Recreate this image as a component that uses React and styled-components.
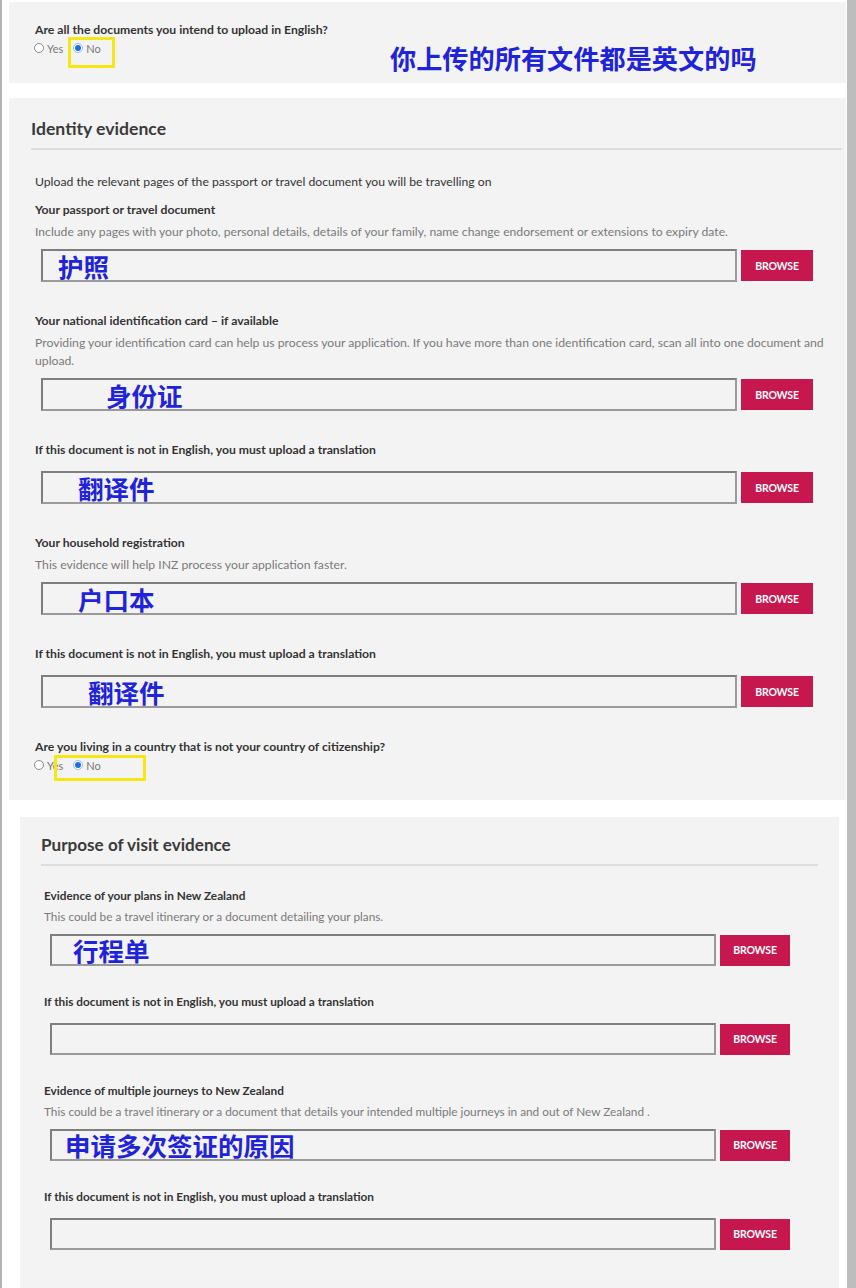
import React from 'react';
import styled, { createGlobalStyle } from 'styled-components';

const GlobalStyle = createGlobalStyle`
  * { box-sizing: border-box; }
  body {
    margin: 0;
    background: #ffffff;
    font-family: Lato, "Noto Sans", sans-serif;
    color: #333;
  }
`;

const Page = styled.div`
  min-height: 100vh;
  display: flex;
  flex-direction: column;
  border-left: 2px solid #b4b4b4;
  border-right: 9px solid #bdbdbd;
`;

// --fs text size, --hs heading size, --hint space above a hint line
const Panel = styled.section`
  --fs: ${(p) => p.$fs || 12.2}px;
  --hs: ${(p) => p.$hs || 17.6}px;
  --hint: ${(p) => p.$hint || 6}px;
  background: #f3f3f3;
  margin: ${(p) => p.$margin};
  padding: ${(p) => p.$padding};
  ${(p) => p.$grow && 'flex: 1;'}
`;

const Heading = styled.h2`
  margin: 0;
  font-size: var(--hs);
  line-height: 20px;
  font-weight: 700;
  color: #3a3a3a;
  padding-bottom: 9px;
  border-bottom: 2px solid #dedede;
`;

const Body = styled.div`
  padding: ${(p) => p.$padding};
`;

const Intro = styled.p`
  margin: 0 0 14px;
  font-size: var(--fs);
  line-height: 14px;
  color: #333;
`;

const FieldList = styled.div`
  display: flex;
  flex-direction: column;
  gap: ${(p) => p.$gap}px;
`;

const Field = styled.div`
  display: flex;
  flex-direction: column;
`;

const Label = styled.div`
  font-size: var(--fs);
  line-height: 14px;
  font-weight: 700;
  color: #333;
`;

const Hint = styled.div`
  margin-top: var(--hint);
  font-size: var(--fs);
  line-height: 18px;
  color: #7a7a7a;
`;

const UploadRow = styled.div`
  display: flex;
  align-items: center;
  gap: 4px;
  margin: ${(p) => p.$top}px ${(p) => p.$right}px 0 6px;
`;

const FileBox = styled.div`
  flex: 1;
  height: ${(p) => p.$h || 33}px;
  border: 2px solid #7e7e7e;
  border-right-color: #9a9a9a;
  border-bottom-color: #9a9a9a;
  background: #f3f3f3;
  padding-left: ${(p) => p.$indent || 0}px;
  display: flex;
  align-items: center;
`;

const Annotation = styled.span`
  font-family: "Noto Sans CJK SC", sans-serif;
  font-weight: 700;
  font-size: ${(p) => p.$size || 25.5}px;
  line-height: 1;
  color: #1f23d9;
  white-space: nowrap;
`;

const Browse = styled.button`
  width: ${(p) => p.$w || 72}px;
  height: 31px;
  border: none;
  background: #c6174f;
  color: #fff;
  font-family: Lato, sans-serif;
  font-size: 10.5px;
  font-weight: 700;
  letter-spacing: -0.2px;
  padding: 0;
  cursor: pointer;
`;

const TopRow = styled.div`
  display: flex;
  align-items: flex-start;
`;

const Question = styled.div`
  width: 355px;
  display: flex;
  flex-direction: column;
`;

const Radios = styled.div`
  position: relative;
  display: flex;
  align-items: center;
  gap: 10px;
  margin-top: 4px;
  margin-left: -1px;
  height: 14px;
`;

const RadioOption = styled.label`
  display: flex;
  align-items: center;
  gap: 3px;
  font-size: 11px;
  color: #777;
`;

const Dot = styled.span`
  width: 10px;
  height: 10px;
  border-radius: 50%;
  background: #fff;
  border: 1px solid ${(p) => (p.$on ? '#9cbcec' : '#8a8a8a')};
  display: flex;
  align-items: center;
  justify-content: center;
  &::after {
    content: '';
    width: 6px;
    height: 6px;
    border-radius: 50%;
    background: ${(p) => (p.$on ? '#1b6fe3' : 'transparent')};
  }
`;

const Highlight = styled.span`
  position: absolute;
  left: ${(p) => p.$x}px;
  top: ${(p) => p.$y}px;
  width: ${(p) => p.$w}px;
  height: ${(p) => p.$h}px;
  border: 3px solid #f5e614;
  pointer-events: none;
`;

const TopNote = styled.div`
  margin-top: 20px;
  font-family: "Noto Sans CJK SC", sans-serif;
  font-weight: 700;
  font-size: 26.2px;
  line-height: 30px;
  color: #1f23d9;
  white-space: nowrap;
`;

const RadioPair = ({ box }) => (
  <Radios>
    <RadioOption><Dot />Yes</RadioOption>
    <RadioOption><Dot $on />No</RadioOption>
    <Highlight {...box} />
  </Radios>
);

// upload row: 8px under a hint, 14px under a bare label
const Upload = ({ note, indent, afterHint, right, h, w }) => (
  <UploadRow $top={afterHint ? 8 : 14} $right={right}>
    <FileBox $indent={indent} $h={h}>
      {note && <Annotation>{note}</Annotation>}
    </FileBox>
    <Browse $w={w}>BROWSE</Browse>
  </UploadRow>
);

const TRANSLATION = 'If this document is not in English, you must upload a translation';

export default function App() {
  return (
    <>
      <GlobalStyle />
      <Page>
        <Panel $margin="2px 1px 0 7px" $padding="21px 20px 10px 26px">
          <TopRow>
            <Question>
              <Label>Are all the documents you intend to upload in English?</Label>
              <RadioPair box={{ $x: 34, $y: -4, $w: 47, $h: 31 }} />
            </Question>
            <TopNote>你上传的所有文件都是英文的吗</TopNote>
          </TopRow>
        </Panel>

        <Panel $margin="15px 1px 0 7px" $padding="21px 4px 28px 22px">
          <Heading>Identity evidence</Heading>
          <Body $padding="25px 0 0 4px">
            <Intro>Upload the relevant pages of the passport or travel document you will be travelling on</Intro>
            <FieldList $gap={32}>
              <Field>
                <Label>Your passport or travel document</Label>
                <Hint>Include any pages with your photo, personal details, details of your family, name change endorsement or extensions to expiry date.</Hint>
                <Upload afterHint note="护照" indent={15} right={29} />
              </Field>
              <Field>
                <Label>Your national identification card – if available</Label>
                <Hint>Providing your identification card can help us process your application. If you have more than one identification card, scan all into one document and upload.</Hint>
                <Upload afterHint note="身份证" indent={63} right={29} />
              </Field>
              <Field>
                <Label>{TRANSLATION}</Label>
                <Upload note="翻译件" indent={35} right={29} />
              </Field>
              <Field>
                <Label>Your household registration</Label>
                <Hint>This evidence will help INZ process your application faster.</Hint>
                <Upload afterHint note="户口本" indent={35} right={29} />
              </Field>
              <Field>
                <Label>{TRANSLATION}</Label>
                <Upload note="翻译件" indent={45} right={29} />
              </Field>
              <Field>
                <Label>Are you living in a country that is not your country of citizenship?</Label>
                <RadioPair box={{ $x: 20, $y: -3, $w: 92, $h: 26 }} />
              </Field>
            </FieldList>
          </Body>
        </Panel>

        <Panel $grow $fs={11.8} $hs={17.1} $hint={5} $margin="17px 8px 0 18px" $padding="18px 21px 30px 21px">
          <Heading>Purpose of visit evidence</Heading>
          <Body $padding="23px 0 0 3px">
            <FieldList $gap={29}>
              <Field>
                <Label>Evidence of your plans in New Zealand</Label>
                <Hint>This could be a travel itinerary or a document detailing your plans.</Hint>
                <Upload afterHint note="行程单" indent={21} right={28} h={32} w={70} />
              </Field>
              <Field>
                <Label>{TRANSLATION}</Label>
                <Upload right={28} h={32} w={70} />
              </Field>
              <Field>
                <Label>Evidence of multiple journeys to New Zealand</Label>
                <Hint>This could be a travel itinerary or a document that details your intended multiple journeys in and out of New Zealand .</Hint>
                <Upload afterHint note="申请多次签证的原因" indent={13} right={28} h={32} w={70} />
              </Field>
              <Field>
                <Label>{TRANSLATION}</Label>
                <Upload right={28} h={32} w={70} />
              </Field>
            </FieldList>
          </Body>
        </Panel>
      </Page>
    </>
  );
}
